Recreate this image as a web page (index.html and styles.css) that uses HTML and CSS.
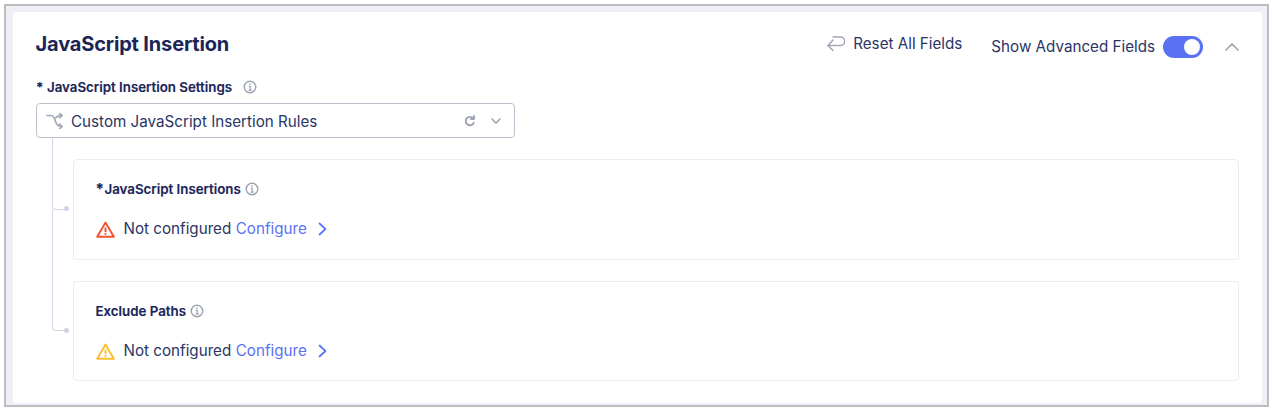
FILE: index.html
```html
<!DOCTYPE html>
<html lang="en">
<head>
<meta charset="utf-8">
<title>JavaScript Insertion</title>
<link rel="stylesheet" href="styles.css">
</head>
<body>
<div class="frame">
  <section class="card">
    <header class="head">
      <h2 class="title">JavaScript Insertion</h2>
      <div class="actions">
        <button class="reset">
          <svg class="reset-icon" width="18" height="16" viewBox="0 0 18 16" fill="none" stroke="#a3a8b8" stroke-width="1.600" stroke-linecap="round" stroke-linejoin="round"><path d="M6 4L1 9.500l5 5"/><path d="M1 9.500h12.500a4 4 0 0 0 0-8.500H6"/></svg>
          <span>Reset All Fields</span>
        </button>
        <div class="advanced">
          <span>Show Advanced Fields</span>
          <span class="toggle"><span class="knob"></span></span>
        </div>
        <svg class="collapse" width="14" height="8" viewBox="0 0 14 8" fill="none" stroke="#a3a8b8" stroke-width="1.700" stroke-linecap="round" stroke-linejoin="round"><path d="M1 7L7 1l6 6"/></svg>
      </div>
    </header>

    <div class="label-row">
      <span class="star">*</span>
      <span class="label">JavaScript Insertion Settings</span>
      <svg class="info info-main" viewBox="0 0 14 14"><use href="#info"/></svg>
    </div>

    <div class="select">
      <svg class="shuffle" width="18" height="16" viewBox="0 0 18 16" fill="none" stroke="#a3a8b8" stroke-width="1.700" stroke-linecap="round" stroke-linejoin="round"><path d="M1 2.500h4c2 0 3 1.500 4 4l.5 2c1 3 3 5 6.500 5"/><path d="M10 4.500c1-1.500 2.500-2 6-2"/><path d="M13.500 .3L16 2.500l-2.500 2.200"/><path d="M13.500 11L16 13.500 13.500 16"/></svg>
      <span class="select-text">Custom JavaScript Insertion Rules</span>
      <svg class="refresh" width="12" height="12" viewBox="0 0 12 12" fill="none" stroke="#9da2b3" stroke-width="1.900" stroke-linecap="round" stroke-linejoin="round"><path d="M9.800 7.800A4.200 4.200 0 1 1 9 3.200"/><path d="M10 1v3H7"/></svg>
      <svg class="chev" width="10" height="6" viewBox="0 0 10 6" fill="none" stroke="#9da2b3" stroke-width="1.600" stroke-linecap="round" stroke-linejoin="round"><path d="M1 1l4 4 4-4"/></svg>
    </div>

    <div class="tree">
      <div class="branch">
        <span class="connector first"></span>
        <span class="dot"></span>
        <div class="panel">
          <div class="panel-label"><span class="panel-star">*</span>JavaScript Insertions <svg class="info" viewBox="0 0 14 14"><use href="#info"/></svg></div>
          <div class="status">
            <svg class="warn" width="19" height="17" viewBox="0 0 19 17" fill="none" stroke="#f4512c" stroke-width="1.900" stroke-linejoin="round"><path d="M9.500 1.600L17.800 15.800H1.200z"/><path d="M9.500 6.500v4.500M9.500 12v1.700"/></svg>
            <span class="status-text">Not configured</span>
            <a class="link">Configure</a>
            <svg class="go" width="9" height="14" viewBox="0 0 9 14" fill="none" stroke="#5b71f5" stroke-width="1.700" stroke-linecap="round" stroke-linejoin="round"><path d="M1.500 1.500L7.500 7l-6 5.500"/></svg>
          </div>
        </div>
      </div>
      <div class="branch">
        <span class="connector second"></span>
        <span class="dot"></span>
        <div class="panel panel-short">
          <div class="panel-label">Exclude Paths <svg class="info" viewBox="0 0 14 14"><use href="#info"/></svg></div>
          <div class="status">
            <svg class="warn" width="19" height="17" viewBox="0 0 19 17" fill="none" stroke="#f9bf2d" stroke-width="1.900" stroke-linejoin="round"><path d="M9.500 1.600L17.800 15.800H1.200z"/><path d="M9.500 6.500v4.500M9.500 12v1.700"/></svg>
            <span class="status-text">Not configured</span>
            <a class="link">Configure</a>
            <svg class="go" width="9" height="14" viewBox="0 0 9 14" fill="none" stroke="#5b71f5" stroke-width="1.700" stroke-linecap="round" stroke-linejoin="round"><path d="M1.500 1.500L7.500 7l-6 5.500"/></svg>
          </div>
        </div>
      </div>
    </div>
  </section>
</div>
<svg class="defs" width="0" height="0"><defs><g id="info" fill="none" stroke="#9da2b3" stroke-width="1.400"><circle cx="7" cy="7" r="5.800"/><path d="M5.800 6.300H7.200V10M5.600 10.200H8.700" stroke-width="1.200"/><path d="M6.200 3.500h1.400v1.400H6.200z" fill="#9da2b3" stroke="none"/></g></defs></svg>
</body>
</html>
```
FILE: styles.css
```css
* { box-sizing: border-box; }
html, body { margin: 0; padding: 0; background: #fff; }
body { font-family: Inter, "Liberation Sans", sans-serif; color: #1b2559; height: 409px; overflow: hidden; }
.defs { position: absolute; }
.frame {
  margin: 4px 5px 0 4px;
  height: 403px;
  border: 2px solid #bdbdbf;
  background: #eff0f7;
  padding: 6px 5px 2px 7px;
}
.card {
  height: 100%;
  background: #fff;
  border-radius: 3px;
  padding: 0 22px 0 23px;
}
.head { display: flex; justify-content: space-between; height: 63px; }
.title { margin: 19px 0 0 -.5px; font-size: 20px; line-height: 26px; font-weight: 700; color: #1a2558; letter-spacing: -.16px; }
.actions { display: flex; align-items: flex-start; }
.reset { display: flex; align-items: center; gap: 8px; margin: 22px 0 0; padding: 0; border: 0; background: none; font: inherit; font-size: 15.200px; line-height: 20px; color: #2a3566; }
.advanced { display: flex; align-items: center; gap: 8px; margin: 23px 0 0 29px; font-size: 15.200px; line-height: 24px; color: #2a3566; }
.toggle { width: 40px; height: 22px; border-radius: 11px; background: #5b71f5; display: flex; justify-content: flex-end; align-items: center; padding-right: 3px; }
.knob { width: 16px; height: 16px; border-radius: 50%; background: #fff; }
.collapse { margin: 31px 1px 0 22px; }
.label-row { display: flex; align-items: center; height: 24px; font-size: 13.300px; font-weight: 600; color: #1a2558; -webkit-text-stroke: .15px #1a2558; }
.star { width: 11px; font-weight: 700; }
.info { width: 14px; height: 14px; vertical-align: -2px; margin-left: 1px; }
.info-main { margin-left: 11px; }
.select {
  display: flex; align-items: center;
  width: 479px; height: 35px; margin-top: 4px;
  border: 1px solid #bfc2ce; border-radius: 4px;
  padding: 0 13px 0 9px;
  font-size: 15.200px; color: #2a3566;
}
.select-text { margin-left: 7px; padding-top: 1px; flex: 1; }
.chev { margin-left: 15px; }
.tree { margin: 21px 1px 0 37px; display: flex; flex-direction: column; gap: 21px; }
.branch { position: relative; }
.panel { height: 101px; border: 1px solid #ebecf5; border-radius: 4px; padding: 20px 22px 0 21.500px; }
.panel-short { height: 100px; }
.panel-label { font-size: 13.300px; line-height: 18px; font-weight: 600; color: #1a2558; -webkit-text-stroke: .15px #1a2558; }
.panel-star { display: inline-block; width: 9px; font-size: 15px; font-weight: 700; line-height: 14px; }
.status { display: flex; align-items: center; margin-top: 20px; font-size: 15.200px; line-height: 22px; color: #2a3566; }
.warn { margin-right: 9px; }
.link { color: #5b71f5; margin-left: 4.500px; }
.go { margin-left: 11px; }
.connector { position: absolute; left: -21px; width: 14px; border-left: 1px solid #d3d6e4; border-bottom: 1px solid #d3d6e4; border-bottom-left-radius: 4px; }
.connector.first { top: -22px; height: 73px; }
.connector.second { top: -71px; height: 121px; }
.dot { position: absolute; left: -9px; top: 47px; width: 5px; height: 5px; border-radius: 50%; background: #cfd2e2; }
```
